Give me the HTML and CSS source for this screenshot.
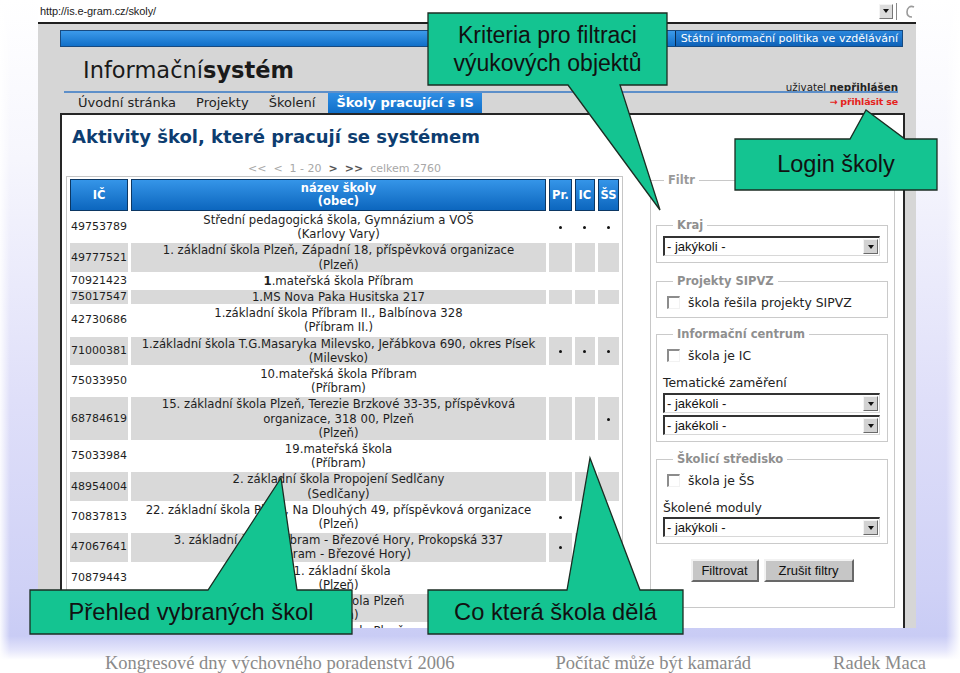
FILE: index.html
```html
<!DOCTYPE html>
<html lang="cs">
<head>
<meta charset="utf-8">
<title>Aktivity škol</title>
<link rel="stylesheet" href="styles.css">
</head>
<body>
<div class="slide">
  <div class="shot">
    <div class="addr">
      <span class="url">http://is.e-gram.cz/skoly/</span>
      <span class="ddbtn"><span class="tri"></span></span>
      <span class="sep"></span>
      <svg class="refresh" width="10" height="16" viewBox="0 0 10 16"><path d="M9 4 C5 2 2 5 2 9 C2 12 4 14 7 14" fill="none" stroke="#9a9a9a" stroke-width="1.6"/></svg>
    </div>
    <div class="browser">
      <div class="topbar"><span class="sip">Státní informační politika ve vzdělávání</span></div>
      <div class="brand">
        <div class="logo">Informační<b>systém</b></div>
        <div class="user">uživatel <b>nepřihlášen</b></div>
      </div>
      <div class="navline"></div>
      <div class="tabs">
        <nav class="tablist">
          <span class="tab">Úvodní stránka</span>
          <span class="tab">Projekty</span>
          <span class="tab">Školení</span>
          <span class="tab active">Školy pracující s IS</span>
        </nav>
        <span class="login">→ přihlásit se</span>
      </div>
      <div class="content">
        <h1 class="title">Aktivity škol, které pracují se systémem</h1>
        <div class="cols">
          <div class="list">
            <div class="pager">&lt;&lt; &nbsp;&lt; &nbsp;1 - 20 &nbsp;<b>&gt;</b> &nbsp;<b>&gt;&gt;</b> &nbsp;celkem 2760</div>
            <table class="schools">
              <colgroup><col class="c-ic"><col class="c-nm"><col class="c-p"><col class="c-i"><col class="c-s"></colgroup>
              <thead>
                <tr><th>IČ</th><th>název školy<br>(obec)</th><th>Pr.</th><th>IC</th><th>ŠS</th></tr>
              </thead>
              <tbody>
                <tr><td class="ic">49753789</td><td class="nm">Střední pedagogická škola, Gymnázium a VOŠ<br>(Karlovy Vary)</td><td class="m"><i class="dot"></i></td><td class="m"><i class="dot"></i></td><td class="m"><i class="dot"></i></td></tr>
                <tr class="g"><td class="ic">49777521</td><td class="nm">1. základní škola Plzeň, Západní 18, příspěvková organizace<br>(Plzeň)</td><td></td><td></td><td></td></tr>
                <tr><td class="ic">70921423</td><td class="nm"><b>1</b>.mateřská škola Příbram</td><td></td><td></td><td></td></tr>
                <tr class="g"><td class="ic">75017547</td><td class="nm">1.MS Nova Paka Husitska 217</td><td></td><td></td><td></td></tr>
                <tr><td class="ic">42730686</td><td class="nm">1.základní škola Příbram II., Balbínova 328<br>(Příbram II.)</td><td></td><td></td><td></td></tr>
                <tr class="g"><td class="ic">71000381</td><td class="nm">1.základní škola T.G.Masaryka Milevsko, Jeřábkova 690, okres Písek<br>(Milevsko)</td><td class="m"><i class="dot"></i></td><td class="m"><i class="dot"></i></td><td class="m"><i class="dot"></i></td></tr>
                <tr><td class="ic">75033950</td><td class="nm">10.mateřská škola Příbram<br>(Příbram)</td><td></td><td></td><td></td></tr>
                <tr class="g"><td class="ic">68784619</td><td class="nm">15. základní škola Plzeň, Terezie Brzkové 33-35, příspěvková<br>organizace, 318 00, Plzeň<br>(Plzeň)</td><td></td><td></td><td class="m"><i class="dot"></i></td></tr>
                <tr><td class="ic">75033984</td><td class="nm">19.mateřská škola<br>(Příbram)</td><td></td><td></td><td></td></tr>
                <tr class="g"><td class="ic">48954004</td><td class="nm">2. základní škola Propojení Sedlčany<br>(Sedlčany)</td><td></td><td></td><td></td></tr>
                <tr><td class="ic">70837813</td><td class="nm">22. základní škola Plzeň, Na Dlouhých 49, příspěvková organizace<br>(Plzeň)</td><td class="m"><i class="dot"></i></td><td></td><td></td></tr>
                <tr class="g"><td class="ic">47067641</td><td class="nm">3. základní škola Příbram - Březové Hory, Prokopská 337<br>(Příbram - Březové Hory)</td><td class="m"><i class="dot"></i></td><td></td><td></td></tr>
                <tr><td class="ic">70879443</td><td class="nm">31. základní škola<br>(Plzeň)</td><td></td><td></td><td></td></tr>
                <tr class="g"><td class="ic">70940011</td><td class="nm">4. základní škola Plzeň<br>(Plzeň)</td><td></td><td></td><td></td></tr>
                <tr><td class="ic">70941386</td><td class="nm">5. základní škola Plzeň<br>(Plzeň)</td><td></td><td></td><td></td></tr>
              </tbody>
            </table>
          </div>
          <form class="filter">
            <fieldset class="outer">
              <legend class="lg-outer">Filtr</legend>
              <fieldset class="grp g-kraj">
                <legend>Kraj</legend>
                <div class="sel first"><span>- jakýkoli -</span><span class="arr"><span class="tri"></span></span></div>
              </fieldset>
              <fieldset class="grp g-proj">
                <legend>Projekty SIPVZ</legend>
                <div class="row-cb"><span class="cb"></span>škola řešila projekty SIPVZ</div>
              </fieldset>
              <fieldset class="grp g-ic">
                <legend>Informační centrum</legend>
                <div class="row-cb"><span class="cb"></span>škola je IC</div>
                <div class="lbl">Tematické zaměření</div>
                <div class="sel"><span>- jakékoli -</span><span class="arr"><span class="tri"></span></span></div>
                <div class="sel"><span>- jakékoli -</span><span class="arr"><span class="tri"></span></span></div>
              </fieldset>
              <fieldset class="grp g-ss">
                <legend>Školicí středisko</legend>
                <div class="row-cb"><span class="cb"></span>škola je ŠS</div>
                <div class="lbl">Školené moduly</div>
                <div class="sel tight"><span>- jakýkoli -</span><span class="arr"><span class="tri"></span></span></div>
              </fieldset>
              <div class="btns">
                <span class="btn b1">Filtrovat</span>
                <span class="btn b2">Zrušit filtry</span>
              </div>
            </fieldset>
          </form>
        </div>
      </div>
    </div>
  </div>
  <footer class="foot">
    <span class="f1">Kongresové dny výchovného poradenství 2006</span>
    <span class="f2">Počítač může být kamarád</span>
    <span class="f3">Radek Maca</span>
  </footer>

  <svg class="callouts" width="960" height="673" viewBox="0 0 960 673">
    <polygon points="428,13 667,13 667,85 620,85 660,210 568,85 428,85"/>
    <polygon points="735,139 850,139 866,110 905,139 937,139 937,190 735,190"/>
    <polygon points="30,590 208,590 281,478 297,590 352,590 352,634 30,634"/>
    <polygon points="428,590 567,590 590,458 640,590 683,590 683,634 428,634"/>
  </svg>
  <div class="ctext c1">Kriteria pro filtraci<br>výukových objektů</div>
  <div class="ctext c2">Login školy</div>
  <div class="ctext c3">Přehled vybraných škol</div>
  <div class="ctext c4">Co která škola dělá</div>
</div>
</body>
</html>
```

FILE: styles.css
```css
html, body {
  margin: 0;
  padding: 0;
}
body {
  width: 960px;
  height: 673px;
  overflow: hidden;
  font-family: "DejaVu Sans", sans-serif;
  background: #fff;
}
.slide {
  position: relative;
  width: 960px;
  height: 673px;
  overflow: hidden;
  background:
    linear-gradient(to right, rgba(255,255,255,.9) 0, rgba(255,255,255,0) 10px),
    linear-gradient(to left, rgba(255,255,255,.95) 0, rgba(255,255,255,0) 14px),
    linear-gradient(180deg, #ffffff 0, #f6f6fd 160px, #dfdff9 400px, #cfd1f6 590px, #c9ccf5 636px, #e4e5fb 650px, #ffffff 660px);
}

/* ---------- screenshot ---------- */
.shot {
  margin-left: 38px;
  width: 878px;
  height: 628px;
  display: flex;
  flex-direction: column;
}
.addr {
  height: 22px;
  flex: none;
  background: #fff;
  display: flex;
  align-items: center;
  padding-left: 2px;
  font: 11px "Liberation Sans", Arial, sans-serif;
  color: #222;
}
.url { letter-spacing: -0.1px; }
.ddbtn {
  margin-left: auto;
  width: 14px;
  height: 15px;
  box-sizing: border-box;
  border: 1px solid;
  border-color: #f4f4f4 #777 #777 #f4f4f4;
  background: #dcdcdc;
  display: flex;
  align-items: center;
  justify-content: center;
}
.tri {
  width: 0;
  height: 0;
  border-left: 3.5px solid transparent;
  border-right: 3.5px solid transparent;
  border-top: 4px solid #111;
}
.sep {
  width: 1px;
  height: 17px;
  background: #888;
  margin-left: 3px;
}
.refresh {
  margin: 0 1px 0 8px;
}
.browser {
  flex: 1;
  min-height: 0;
  border-top: 2px solid #1f1f1f;
  background: #d6d6d6;
  padding: 6px 11px 0 22px;
  display: flex;
  flex-direction: column;
}
.topbar {
  flex: none;
  height: 17px;
  box-sizing: border-box;
  background: linear-gradient(#3c9aea, #1170c9);
  border: 1px solid #174a80;
  display: flex;
  justify-content: flex-end;
  margin-right: 2px;
}
.sip {
  border-left: 1px solid #0b2a4d;
  background: linear-gradient(#2a86dc, #0e62b8);
  color: #fff;
  font-size: 11px;
  line-height: 15px;
  padding: 0 4px 0 5px;
}
.brand {
  flex: none;
  height: 44px;
  display: flex;
  justify-content: space-between;
  align-items: flex-end;
}
.logo {
  margin: 0 0 8px 23px;
  font-size: 22.5px;
  line-height: 26px;
  color: #1a1a1a;
}
.logo b { font-weight: bold; }
.user {
  font-size: 10.3px;
  line-height: 12px;
  margin: 0 7px -2px 0;
  color: #222;
}
.navline {
  flex: none;
  height: 2px;
  background: #5d8fc9;
  margin: 0 7px 0 4px;
}
.tabs {
  flex: none;
  height: 20px;
  display: flex;
  justify-content: space-between;
}
.tablist {
  display: flex;
  padding-left: 8px;
}
.tab {
  font-size: 13px;
  line-height: 20px;
  padding: 0 10px;
  color: #222;
}
.tab.active {
  margin-left: 3px;
  padding: 0 8px;
  background: linear-gradient(#2f8ee4, #1170c9);
  color: #fff;
  font-weight: bold;
  font-size: 13px;
}
.login {
  color: #e5221c;
  font-weight: bold;
  font-size: 9.5px;
  line-height: 18px;
  margin-right: 7px;
  letter-spacing: -0.2px;
}
.content {
  flex: 1;
  min-height: 0;
  overflow: hidden;
  background: #fff;
  border: 2px solid #262626;
  border-bottom: 0;
}
.title {
  margin: 11px 0 0 10px;
  font-size: 18px;
  line-height: 22px;
  font-weight: bold;
  color: #0d3d70;
}
.cols {
  display: grid;
  grid-template-columns: 557px 245px;
  column-gap: 27px;
  align-items: start;
  margin-top: 12px;
  padding-left: 4px;
}
.pager {
  margin-top: 2px;
  height: 14px;
  line-height: 14px;
  text-align: center;
  font-size: 11px;
  color: #a8a8a8;
}
.pager b { color: #555; }

/* table */
.schools {
  width: 557px;
  table-layout: fixed;
  border-collapse: separate;
  border-spacing: 3px 2px;
  border: 1px solid #c6c6c6;
  font-size: 11.7px;
  line-height: 14.2px;
  color: #1e1e1e;
}
.c-ic { width: 58px; }
.c-nm { width: 414px; }
.c-p { width: 23px; }
.c-i { width: 20px; }
.c-s { width: 21px; }
.schools th {
  border: 1px solid #0c3763;
  background: linear-gradient(#3595e8, #0c66be);
  color: #fff;
  font-weight: bold;
  font-size: 11.5px;
  line-height: 13px;
  padding: 2px 0;
}
.schools td {
  padding: 0;
  vertical-align: middle;
}
.schools tr.g td { background: #d9d9d9; }
.schools td.ic { padding-left: 1px; text-align: left; font-size: 11px; }
.schools td.nm { text-align: center; }
.schools td.m { text-align: center; }
.dot {
  display: inline-block;
  width: 3px;
  height: 3px;
  border-radius: 50%;
  background: #111;
  vertical-align: middle;
}

/* filter */
.filter { margin: 0; }
.outer {
  margin: 13px 0 0;
  padding: 31px 6px 25px 5px;
  border: 1px solid #c8c8c8;
  min-width: 0;
}
.lg-outer {
  margin-left: 8px;
  padding: 0 4px;
  font-size: 11.5px;
  line-height: 14px;
  font-weight: bold;
  color: #9a9a9a;
}
.grp {
  margin: 0;
  padding: 0 7px 6px 6px;
  border: 1px solid #cacaca;
  min-width: 0;
}
.grp legend {
  margin-left: 10px;
  padding: 0 4px;
  font-size: 11.5px;
  line-height: 14px;
  font-weight: bold;
  color: #8f8f8f;
}
.g-kraj { margin-bottom: 11px; }
.g-proj { margin-bottom: 9px; padding-bottom: 7px; }
.g-ic { margin-bottom: 10px; }
.row-cb {
  display: flex;
  align-items: center;
  height: 16px;
  margin-top: 6px;
  padding-left: 4px;
  font-size: 12.4px;
  color: #222;
}
.cb {
  width: 13px;
  height: 13px;
  box-sizing: border-box;
  border-top: 2px solid #8c8c8c;
  border-left: 2px solid #8c8c8c;
  border-right: 1px solid #f2f2f2;
  border-bottom: 1px solid #f2f2f2;
  background: #fff;
  margin-right: 8px;
}
.lbl {
  margin-top: 12px;
  line-height: 16px;
  font-size: 12.4px;
  color: #222;
}
.sel {
  margin-top: 2px;
  height: 20px;
  box-sizing: border-box;
  border-top: 2px solid #333;
  border-left: 2px solid #333;
  border-right: 1px solid #d8d8d8;
  border-bottom: 1px solid #d8d8d8;
  background: #fff;
  display: flex;
  align-items: center;
  justify-content: space-between;
  padding-left: 2px;
  font: 13px "Liberation Sans", Arial, sans-serif;
  color: #111;
}
.sel.first { margin-top: 4px; }
.sel.tight { margin-top: 1px; }
.arr {
  width: 15px;
  height: 15px;
  box-sizing: border-box;
  margin-right: 1px;
  border: 1px solid;
  border-color: #f4f4f4 #6a6a6a #6a6a6a #f4f4f4;
  background: #d2d2d2;
  display: flex;
  align-items: center;
  justify-content: center;
}
.btns {
  display: flex;
  justify-content: center;
  gap: 5px;
  margin-top: 15px;
}
.btn {
  height: 23px;
  box-sizing: border-box;
  display: flex;
  align-items: center;
  justify-content: center;
  font: 13px "Liberation Sans", Arial, sans-serif;
  color: #111;
  background: #c6c6c6;
  border: 2px solid;
  border-color: #f2f2f2 #686868 #686868 #f2f2f2;
}
.b1 { width: 68px; }
.b2 { width: 90px; }

/* footer */
.foot {
  display: flex;
  padding-top: 24px;
  font: 18.5px/22px "Liberation Serif", "Times New Roman", serif;
  color: #8a8a8a;
  white-space: nowrap;
}
.f1 { margin-left: 105px; }
.f2 { margin-left: 101px; }
.f3 { margin-left: 82px; }

/* callouts */
.callouts {
  position: absolute;
  left: 0;
  top: 0;
  pointer-events: none;
}
.callouts polygon {
  fill: #14c491;
  stroke: #1b2d23;
  stroke-width: 1.3;
  stroke-linejoin: miter;
}
.ctext {
  position: absolute;
  display: flex;
  align-items: center;
  justify-content: center;
  text-align: center;
  font-family: "Liberation Sans", Arial, sans-serif;
  color: #111;
  white-space: nowrap;
}
.c1 { left: 428px; top: 13px; width: 239px; height: 72px; font-size: 23px; line-height: 28px; }
.c2 { left: 735px; top: 139px; width: 202px; height: 51px; font-size: 23.5px; }
.c3 { left: 30px; top: 590px; width: 322px; height: 44px; font-size: 23.7px; }
.c4 { left: 428px; top: 590px; width: 255px; height: 44px; font-size: 23.7px; }
```
